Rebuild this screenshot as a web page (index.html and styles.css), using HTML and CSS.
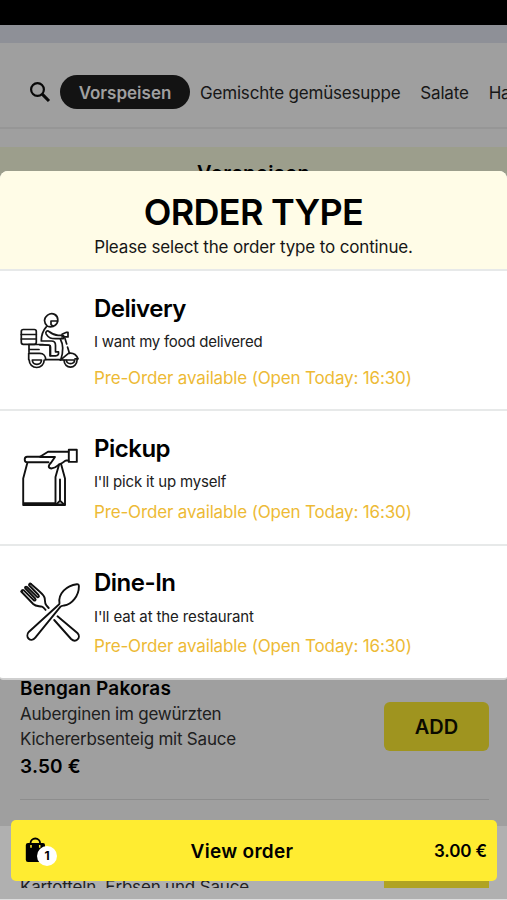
FILE: index.html
```html
<!DOCTYPE html>
<html lang="de">
<head>
<meta charset="utf-8">
<title>Order type</title>
<link rel="stylesheet" href="styles.css">
</head>
<body>
<div class="screen">
  <div class="status"></div>
  <div class="strip"></div>
  <nav class="nav">
    <svg class="search" viewBox="0 0 22 22" fill="none" stroke="#080808"><circle cx="8.5" cy="8.5" r="6.4" stroke-width="2.2"/><path d="M13.2 13.2 20 20" stroke-width="3.1"/></svg>
    <span class="pill">Vorspeisen</span>
    <span class="tab">Gemischte gemüsesuppe</span>
    <span class="tab">Salate</span>
    <span class="tab">Ha</span>
  </nav>
  <div class="category"><h3>Vorspeisen</h3></div>
  <main class="menu">
    <article class="dish">
      <div class="dish-text">
        <h4>Bengan Pakoras</h4>
        <p>Auberginen im gewürzten<br>Kichererbsenteig mit Sauce</p>
        <strong>3.50 €</strong>
      </div>
      <button class="add">ADD</button>
    </article>
  </main>
  <div class="tail">
    <div class="tail-clip">
      <p>Kartotteln, Erbsen und Sauce</p>
      <span class="add-end"></span>
    </div>
  </div>

  <section class="modal">
    <header class="modal-head">
      <h1>ORDER TYPE</h1>
      <p>Please select the order type to continue.</p>
    </header>
    <div class="option delivery">
      <svg class="icon" viewBox="0 0 100 100" fill="none" stroke="#151515" stroke-width="1.7" stroke-linecap="round" stroke-linejoin="round">
        <rect x="21.3" y="39.5" width="15" height="14.8" rx="2"/><path d="M21.3 44.5h15M21.3 49h15"/>
        <path d="M47.5 36.3c-4-3.5-4-8 .1-11.200c5-3.500 10.200 0 10.200 4.700c0 5-4.500 8.200-10.300 6.500Z"/>
        <path d="M57.500 31h-6.500v3.500l2.200 1.800"/>
        <path d="M46.300 36.800c-3 3.200-5 8.200-5 14.200h10c2.700 0 4.200 1.800 4.200 4.200v6.600h3c.4 2.500-.6 4-2.800 4h-5.200v-8.600c0-1.500-.8-2.200-2.300-2.200h-8.200"/>
        <path d="M49 41.500c-1.800-1.600-4 .5-2.800 2.600c2.700 4.400 5 4.600 9.300 4.600h6.700c2.400 0 2.400-3.400 0-3.400h-4c-3.200 0-5.300-.6-9.200-3.800Z"/>
        <path d="M62 44.200l4.500-1.900h1.500v4.600h-6M65 48.500l1.700 5.500M67.500 57l2 6.500"/>
        <path d="M60.500 49.500c3.500 6 2.200 14.200.3 20.200H45.500"/>
        <path d="M28.700 54.500h13.800l7.500 1v10.300M29 55v7M30 59.500h9M28.700 69.500v-6.200h11c4 0 6 3 6 6.200"/>
        <path d="M29.200 70a7.500 7.500 0 1 0 15 0M32.300 70h9.200c-.3 5.800-8.900 5.800-9.200 0Z"/>
        <path d="M60.300 70.200l8.500-7c3.800-.6 7.500 1.300 9.300 5.600H75M61 70h5"/>
        <path d="M77.200 69.300c-.4 10.200-13 10.200-13.200.7M66.300 70h8.400c-.3 4.800-7.900 4.800-8.400 0Z"/>
      </svg>
      <div class="option-text"><h2>Delivery</h2><p class="desc d1">I want my food delivered</p><p class="pre">Pre-Order available (Open Today: 16:30)</p></div>
    </div>
    <div class="option">
      <svg class="icon" viewBox="0 0 100 100" fill="none" stroke="#101010" stroke-width="1.900" stroke-linecap="round" stroke-linejoin="round">
        <path d="M40.500 26.700H27.200c-3.300 0-3.300 5.600 0 5.600H48.500M27.500 32.300L23.200 48.500V75H65V48.500L61.200 34.500M24 73.200H55"/>
        <path d="M40 26.700l8-5h20.500M68.500 30.500h-2.300c-2 0-2.700 2.500-5.500 3.200c-3.600.8-3 4.200-9.400 4.800c-4-.7-2.600-3.600-.3-5.800l4-5.700H40.500"/>
        <path d="M59 34.800L55.500 47V74.500h9.300"/><path d="M60 49.500V71M60 70.800l-3.700 3.600M60 70.800l4 3.600"/>
        <rect x="68.800" y="19.700" width="8" height="12.200"/>
      </svg>
      <div class="option-text"><h2>Pickup</h2><p class="desc d2">I'll pick it up myself</p><p class="pre">Pre-Order available (Open Today: 16:30)</p></div>
    </div>
    <div class="option dine">
      <svg class="icon" viewBox="0 0 100 100" fill="none" stroke="#101010" stroke-width="1.900" stroke-linecap="round" stroke-linejoin="round">
        <path d="M59.500 38.300c-1.700-9.200 7-18 17.300-19.100c1.600-.1 2.100.4 2.100 2c.1 9.500-7.200 18.500-14.900 19.300c-1.800.2-2.500.1-3.500 1.200L35.300 72.700c-4.500 5.600-11-.8-6.300-6L57 41.200c1.500-1.300 2.500-1.500 2.500-2.900Z"/>
        <path d="M48.700 43l-2.300-2.600c-1.500-1.600-1.400-2.600-1.600-6.500c-.1-3.300-3.300-5.600-6.100-8.100l-8-7M21.200 26.500l12 12.500c2.900 2.800 6 1.800 8.700 2.700c1.600.5 2.400 1.700 3.700 3.200"/>
        <path d="M30.700 18.800c-1-.7-2.300.8-1.400 1.700L38.500 30c1.300 1.500-.4 3-1.700 1.700L27 22c-1.300-1-2.700.4-1.500 1.500l9.700 10c1.200 1.400-.4 2.800-1.600 1.600l-9.800-9.800c-1.200-1-2.800.3-1.700 1.400"/>
        <path d="M57.500 51.300L77.400 68c4.300 4.500-1.600 10.500-6.300 6L54.200 55"/>
      </svg>
      <div class="option-text"><h2>Dine-In</h2><p class="desc d3">I'll eat at the restaurant</p><p class="pre">Pre-Order available (Open Today: 16:30)</p></div>
    </div>
  </section>

  <div class="cart">
    <span class="bag">
      <svg viewBox="0 0 22 26"><path d="M5.500 8V6.300a4.800 4.800 0 0 1 9.600 0V8" fill="none" stroke="#000" stroke-width="1.800"/><path d="M3 6h15q2 0 2 2v17H3q-2.200 0-2.200-2.200V8Q.8 6 3 6Z"/><path d="M6 8v2.700M14.700 8v2.700" stroke="#ffec31" stroke-width="1.500"/></svg>
      <b class="badge">1</b>
    </span>
    <span class="view">View order</span>
    <span class="total">3.00 €</span>
  </div>
</div>
</body>
</html>
```

FILE: styles.css
```css
* { box-sizing: border-box; }
body, h1, h2, h3, h4, p { margin: 0; }
body { font-family: Inter, "Liberation Sans", sans-serif; color: #000; }
.screen { position: relative; width: 507px; height: 900px; overflow: hidden; background: #9f9f9f; display: flex; flex-direction: column; }
.status { height: 25px; background: #000; flex: none; }
.strip { height: 18px; background: #8e9097; flex: none; }
.nav { height: 86px; flex: none; display: flex; align-items: center; padding: 14px 0 0 29px; border-bottom: 2px solid #969696; white-space: nowrap; font-size: 17px; color: #171717; }
.search { width: 22px; height: 22px; flex: none; margin-right: 9px; }
.pill { width: 130px; height: 34px; flex: none; border-radius: 17px; background: #131313; color: #a0a0a0; font-weight: 600; display: flex; align-items: center; justify-content: center; margin-right: 10px; padding-top: 1px; }
.tab { margin-right: 20px; padding-top: 2px; letter-spacing: -0.19px; }
.category { height: 45px; flex: none; margin-top: 18px; background: #9c9e8c; text-align: center; padding-top: 13px; }
.category h3 { font-size: 20px; line-height: 26px; font-weight: 600; letter-spacing: 0.4px; }
.menu { height: 634px; flex: none; padding: 484px 18px 0 20px; }
.dish { display: flex; justify-content: space-between; border-bottom: 1px solid #8d8d8d; height: 124px; }
.dish h4 { font-size: 19px; line-height: 25px; font-weight: 600; letter-spacing: 0.2px; }
.dish p { font-size: 17px; line-height: 24.500px; color: #202020; margin-top: 1px; white-space: nowrap; letter-spacing: -0.22px; }
.dish strong { display: block; font-size: 19px; line-height: 28px; font-weight: 600; margin-top: 2px; letter-spacing: 0.2px; }
.add { font: 600 20px Inter, sans-serif; width: 105px; height: 49px; border: 0; border-radius: 6px; background: #9f941f; color: #0a0a00; margin-top: 26px; padding: 0; }
.tail { flex: none; height: 74px; background: #b0b0b0; border-bottom: 1px solid #ddd; }
.tail-clip { height: 62px; overflow: hidden; display: flex; justify-content: space-between; align-items: flex-end; padding: 0 18px 0 20px; }
.tail p { font-size: 17px; line-height: 20px; margin-bottom: -9px; color: #222; letter-spacing: -0.18px; }
.add-end { width: 105px; height: 30px; background: #b0a322; }

.modal { position: absolute; top: 171px; left: 0; width: 507px; height: 509px; border-radius: 8px 8px 3px 3px; overflow: hidden; background: #fff; border-bottom: 2px solid #cfcfcf; }
.modal-head { height: 100px; background: #fffce7; border-bottom: 2px solid #e7e9e9; text-align: center; padding-top: 19px; }
.modal-head h1 { font-size: 36px; line-height: 44px; font-weight: 600; letter-spacing: -0.7px; }
.modal-head p { font-size: 17px; line-height: 27px; color: #161616; letter-spacing: -0.15px; }
.option { display: flex; height: 134.500px; border-bottom: 2px solid #e7e9e9; padding-top: 19px; white-space: nowrap; }
.delivery { height: 140px; }
.option:last-child { border-bottom: 0; }
.icon { width: 100px; height: 100px; flex: none; margin-right: -6px; }
.option h2 { font-size: 24px; line-height: 36px; font-weight: 600; letter-spacing: -0.5px; padding-top: 1px; }
.dine h2 { padding: 0 0 1px; }
.desc { font-size: 15px; line-height: 20px; margin-top: 5px; color: #202020; }
.d1 { letter-spacing: -0.25px; }
.d2 { letter-spacing: -0.18px; }
.d3 { letter-spacing: -0.12px; }
.pre { font-size: 17px; line-height: 24px; margin-top: 8px; color: #edba35; letter-spacing: -0.15px; }
.delivery .pre { margin-top: 14px; }
.dine .pre { margin-top: 7px; }

.cart { position: absolute; left: 11px; top: 820px; width: 486px; height: 61px; border-radius: 5px; background: #ffec31; display: grid; grid-template-columns: 32px 1fr 60px; align-items: center; padding: 1px 10px 0 14px; }
.bag { position: relative; height: 28px; }
.bag svg { width: 22px; height: 26px; display: block; }
.badge { position: absolute; left: 12px; top: 9px; width: 20px; height: 20px; border-radius: 50%; background: #fff; font-size: 12px; line-height: 20px; text-align: center; }
.view { font-size: 19px; font-weight: 600; text-align: center; letter-spacing: 0.3px; }
.total { font-size: 17px; font-weight: 600; text-align: right; white-space: nowrap; letter-spacing: -0.1px; }
```
